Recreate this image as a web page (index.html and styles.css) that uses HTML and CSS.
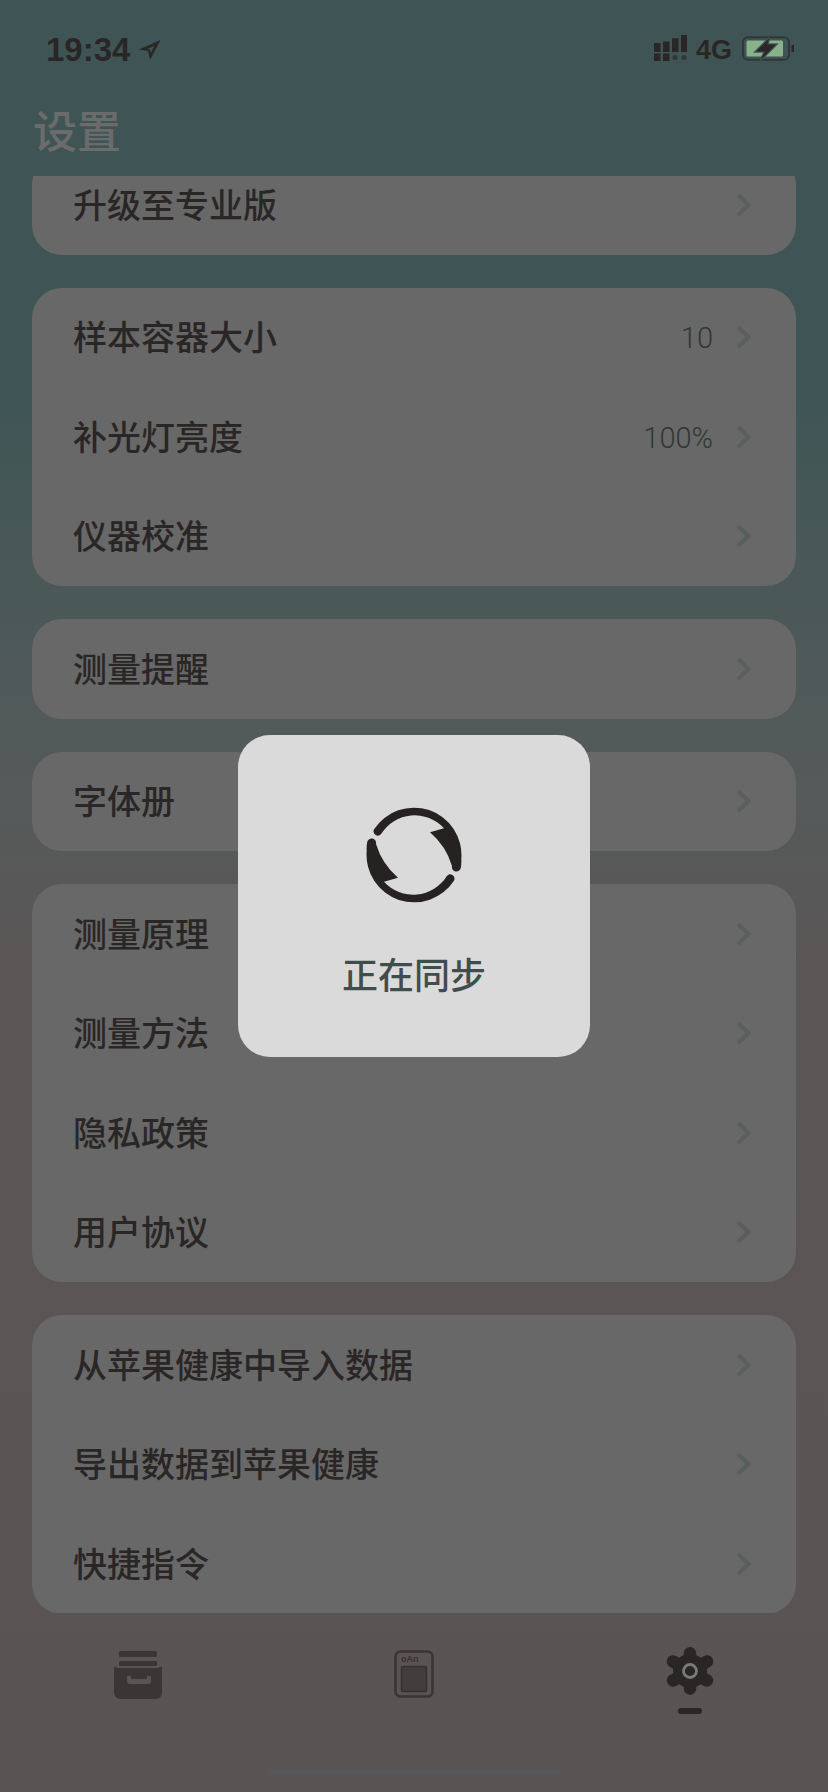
FILE: index.html
```html
<!DOCTYPE html>
<html lang="zh-CN">
<head>
    <meta charset="UTF-8">
    <meta name="viewport" content="width=device-width, initial-scale=1.0">
    <title>设置</title>
    <link rel="stylesheet" href="styles.css">
</head>
<body>
    <div class="phone">
        <!-- Status bar -->
        <div class="status-bar">
            <div class="status-left">
                <span class="clock">19:34</span>
                <svg class="location-arrow" viewBox="0 0 22 20"><path d="M21.5 0 L0 9.5 L9 11 L11 20 Z M15 6 L8 9.2 L11 9.6 L12 13 Z" fill-rule="evenodd"/></svg>
            </div>
            <div class="status-right">
                <svg class="signal" viewBox="0 0 33 26">
                    <rect x="0" y="8" width="6.5" height="9"/>
                    <rect x="9" y="6.5" width="6.5" height="10.5"/>
                    <rect x="18" y="3.3" width="6.5" height="13.7"/>
                    <rect x="27" y="0" width="6" height="17"/>
                    <rect x="0" y="18.5" width="6.5" height="7.5"/>
                    <rect x="9" y="18.5" width="6.5" height="7.5"/>
                    <circle cx="21" cy="22.5" r="2.6" opacity="0.6"/>
                    <circle cx="30" cy="22.5" r="2.6" opacity="0.6"/>
                </svg>
                <span class="network">4G</span>
                <svg class="battery" viewBox="0 0 54 26">
                    <rect x="2" y="1.2" width="46" height="22.6" rx="5" fill="none" stroke="#333636" stroke-width="2"/>
                    <rect x="5.5" y="4.5" width="36.5" height="16" rx="1.5" fill="#8ab08c"/>
                    <path class="battery-bolt" d="M28.5 2 L15 15.5 H24 L19.5 24 L35 8.5 H26 Z"/>
                    <rect x="50.5" y="9" width="2.5" height="7" fill="#2a2626"/>
                </svg>
            </div>
        </div>

        <h1 class="page-title">设置</h1>

        <!-- Settings list, scrolled a little -->
        <div class="list">
            <div class="list-inner">
                <div class="card">
                    <div class="row"><span class="row-label">升级至专业版</span><svg class="chevron" viewBox="0 0 15 24"><polyline points="2,2 12.5,12 2,22"/></svg></div>
                </div>
                <div class="card">
                    <div class="row"><span class="row-label">样本容器大小</span><span class="row-value">10</span><svg class="chevron" viewBox="0 0 15 24"><polyline points="2,2 12.5,12 2,22"/></svg></div>
                    <div class="row"><span class="row-label">补光灯亮度</span><span class="row-value">100%</span><svg class="chevron" viewBox="0 0 15 24"><polyline points="2,2 12.5,12 2,22"/></svg></div>
                    <div class="row"><span class="row-label">仪器校准</span><svg class="chevron" viewBox="0 0 15 24"><polyline points="2,2 12.5,12 2,22"/></svg></div>
                </div>
                <div class="card">
                    <div class="row"><span class="row-label">测量提醒</span><svg class="chevron" viewBox="0 0 15 24"><polyline points="2,2 12.5,12 2,22"/></svg></div>
                </div>
                <div class="card">
                    <div class="row"><span class="row-label">字体册</span><svg class="chevron" viewBox="0 0 15 24"><polyline points="2,2 12.5,12 2,22"/></svg></div>
                </div>
                <div class="card">
                    <div class="row"><span class="row-label">测量原理</span><svg class="chevron" viewBox="0 0 15 24"><polyline points="2,2 12.5,12 2,22"/></svg></div>
                    <div class="row"><span class="row-label">测量方法</span><svg class="chevron" viewBox="0 0 15 24"><polyline points="2,2 12.5,12 2,22"/></svg></div>
                    <div class="row"><span class="row-label">隐私政策</span><svg class="chevron" viewBox="0 0 15 24"><polyline points="2,2 12.5,12 2,22"/></svg></div>
                    <div class="row"><span class="row-label">用户协议</span><svg class="chevron" viewBox="0 0 15 24"><polyline points="2,2 12.5,12 2,22"/></svg></div>
                </div>
                <div class="card">
                    <div class="row"><span class="row-label">从苹果健康中导入数据</span><svg class="chevron" viewBox="0 0 15 24"><polyline points="2,2 12.5,12 2,22"/></svg></div>
                    <div class="row"><span class="row-label">导出数据到苹果健康</span><svg class="chevron" viewBox="0 0 15 24"><polyline points="2,2 12.5,12 2,22"/></svg></div>
                    <div class="row"><span class="row-label">快捷指令</span><svg class="chevron" viewBox="0 0 15 24"><polyline points="2,2 12.5,12 2,22"/></svg></div>
                </div>
            </div>
        </div>

        <!-- Tab bar -->
        <div class="tab-bar">
            <div class="tab">
                <svg class="tab-archive" viewBox="0 0 48 48">
                    <rect x="5" y="0" width="38" height="6" rx="1.5"/>
                    <rect x="5" y="10" width="38" height="5" rx="1.5"/>
                    <path fill-rule="evenodd" d="M4 17 H44 L48 15.5 V41 Q48 48 41 48 H7 Q0 48 0 41 V15.5 Z M13 25 V30 Q13 33 16 33 H34 Q37 33 37 30 V25 H33 V28 H17 V25 Z"/>
                </svg>
            </div>
            <div class="tab">
                <svg class="tab-device" viewBox="0 0 40 48">
                    <rect x="1.5" y="1.5" width="37" height="45" rx="5" fill="none" stroke="#3a3636" stroke-width="2.6"/>
                    <text x="7" y="12" class="tab-device-text">oAn</text>
                    <rect x="7.5" y="16.5" width="25" height="25" rx="1" fill="#423e3e" stroke="#353131" stroke-width="1.5"/>
                </svg>
            </div>
            <div class="tab tab-active">
                <svg class="tab-gear" viewBox="0 0 48 48">
                    <circle cx="24" cy="24" r="17"/>
                    <g stroke="#2a2626" stroke-width="12.5" stroke-linecap="round">
                        <line x1="24" y1="24" x2="24" y2="6.3"/>
                        <line x1="24" y1="24" x2="41" y2="14.5"/>
                        <line x1="24" y1="24" x2="41" y2="33.5"/>
                        <line x1="24" y1="24" x2="24" y2="41.7"/>
                        <line x1="24" y1="24" x2="7" y2="33.5"/>
                        <line x1="24" y1="24" x2="7" y2="14.5"/>
                    </g>
                    <circle cx="24" cy="24" r="6.5" fill="none" stroke="#7a7a7a" stroke-width="2.8"/>
                </svg>
                <div class="tab-indicator"></div>
            </div>
        </div>
        <div class="home-indicator"></div>

        <!-- Sync toast over everything -->
        <div class="toast">
            <svg class="sync-icon" viewBox="0 0 96 96">
                <path d="M7.9 22.6 A47.5 47.5 0 0 1 95.3 52 Q95.6 57 94.8 61 A4.4 4.4 0 0 1 86 59 Q80 39 64 25.3 L78 21.3 A39.5 39.5 0 0 0 15.1 27.1 A4.3 4.3 0 0 1 7.9 22.6 Z"/>
                <path transform="rotate(180 48 48)" d="M7.9 22.6 A47.5 47.5 0 0 1 95.3 52 Q95.6 57 94.8 61 A4.4 4.4 0 0 1 86 59 Q80 39 64 25.3 L78 21.3 A39.5 39.5 0 0 0 15.1 27.1 A4.3 4.3 0 0 1 7.9 22.6 Z"/>
            </svg>
            <div class="toast-text">正在同步</div>
        </div>
    </div>
</body>
</html>
```

FILE: styles.css
```css
* {
    box-sizing: border-box;
}

body {
    margin: 0;
    font-family: "Noto Sans CJK SC", "Noto Sans", sans-serif;
    color: #2a2626;
}

.phone {
    position: relative;
    width: 828px;
    height: 1792px;
    overflow: hidden;
    display: flex;
    flex-direction: column;
    background: linear-gradient(180deg, #3f5555 0%, #3f5555 22%, #4a5858 32%, #555a5a 44%, #5b5656 54%, #5a5353 100%);
}

.status-bar {
    height: 100px;
    padding: 33px 33px 0 46px;
    display: flex;
    justify-content: space-between;
    align-items: flex-start;
    flex-shrink: 0;
}

.status-left {
    display: flex;
    align-items: center;
    gap: 9px;
}

.clock {
    font-family: "Liberation Sans", sans-serif;
    font-weight: bold;
    font-size: 33px;
    line-height: 34px;
}

.location-arrow {
    width: 22px;
    height: 20px;
    fill: #2a2626;
}

.status-right {
    display: flex;
    align-items: center;
    height: 34px;
}

.signal {
    width: 33px;
    height: 26px;
    fill: #2a2626;
    margin-bottom: 4px;
}

.network {
    font-family: "Liberation Sans", sans-serif;
    font-weight: bold;
    font-size: 27px;
    margin-left: 9px;
    margin-right: 9px;
}

.battery {
    width: 54px;
    height: 26px;
    margin-bottom: 2px;
}

.battery-bolt {
    fill: #2a2626;
    stroke: #3f5555;
    stroke-width: 2.5;
    paint-order: stroke;
}

.page-title {
    margin: 0;
    height: 76px;
    padding-left: 33px;
    font-size: 44px;
    line-height: 58px;
    font-weight: 500;
    color: #6b6b6b;
    flex-shrink: 0;
}

.list {
    flex: 1;
    overflow: hidden;
}

.list-inner {
    margin-top: -21px;
    padding: 0 32px;
    display: flex;
    flex-direction: column;
    gap: 33px;
}

.card {
    background-color: #686868;
    border-radius: 30px;
    padding: 0 45px 0 41px;
}

.row {
    height: 99.5px;
    display: flex;
    align-items: center;
}

.row-label {
    flex: 1;
    font-size: 34px;
    font-weight: 500;
    line-height: 1;
    padding-bottom: 2px;
}

.row-value {
    font-family: "Roboto", sans-serif;
    font-weight: 300;
    font-size: 29px;
    color: #2f3838;
    margin-right: 23px;
    padding-top: 2px;
}

.chevron {
    width: 15px;
    height: 24px;
    fill: none;
    stroke: #5a5e5e;
    stroke-width: 4;
}

.tab-bar {
    height: 179px;
    flex-shrink: 0;
    padding-top: 38px;
    display: flex;
    justify-content: space-around;
    align-items: flex-start;
}

.tab {
    width: 276px;
    display: flex;
    flex-direction: column;
    align-items: center;
}

.tab-archive {
    width: 48px;
    height: 48px;
    fill: #3a3636;
}

.tab-device {
    width: 40px;
    height: 48px;
    margin-top: -1px;
}

.tab-device-text {
    font-family: "Liberation Sans", sans-serif;
    font-size: 9px;
    font-weight: bold;
    fill: #353131;
}

.tab-gear {
    width: 48px;
    height: 48px;
    fill: #2a2626;
    margin-top: -4px;
}

.tab-indicator {
    width: 24px;
    height: 6px;
    border-radius: 3px;
    background-color: #2a2626;
    margin-top: 13px;
}

.home-indicator {
    position: absolute;
    left: 268px;
    bottom: 17px;
    width: 292px;
    height: 6px;
    border-radius: 3px;
    background-color: #555858;
}

.toast {
    position: absolute;
    left: 238px;
    top: 735px;
    width: 352px;
    height: 322px;
    border-radius: 32px;
    background-color: #dadada;
    display: flex;
    flex-direction: column;
    align-items: center;
    padding-top: 72px;
}

.sync-icon {
    width: 96px;
    height: 96px;
    fill: #262222;
}

.toast-text {
    margin-top: 46px;
    font-size: 36px;
    font-weight: 500;
    line-height: 48px;
    color: #3f4d4d;
}
```
